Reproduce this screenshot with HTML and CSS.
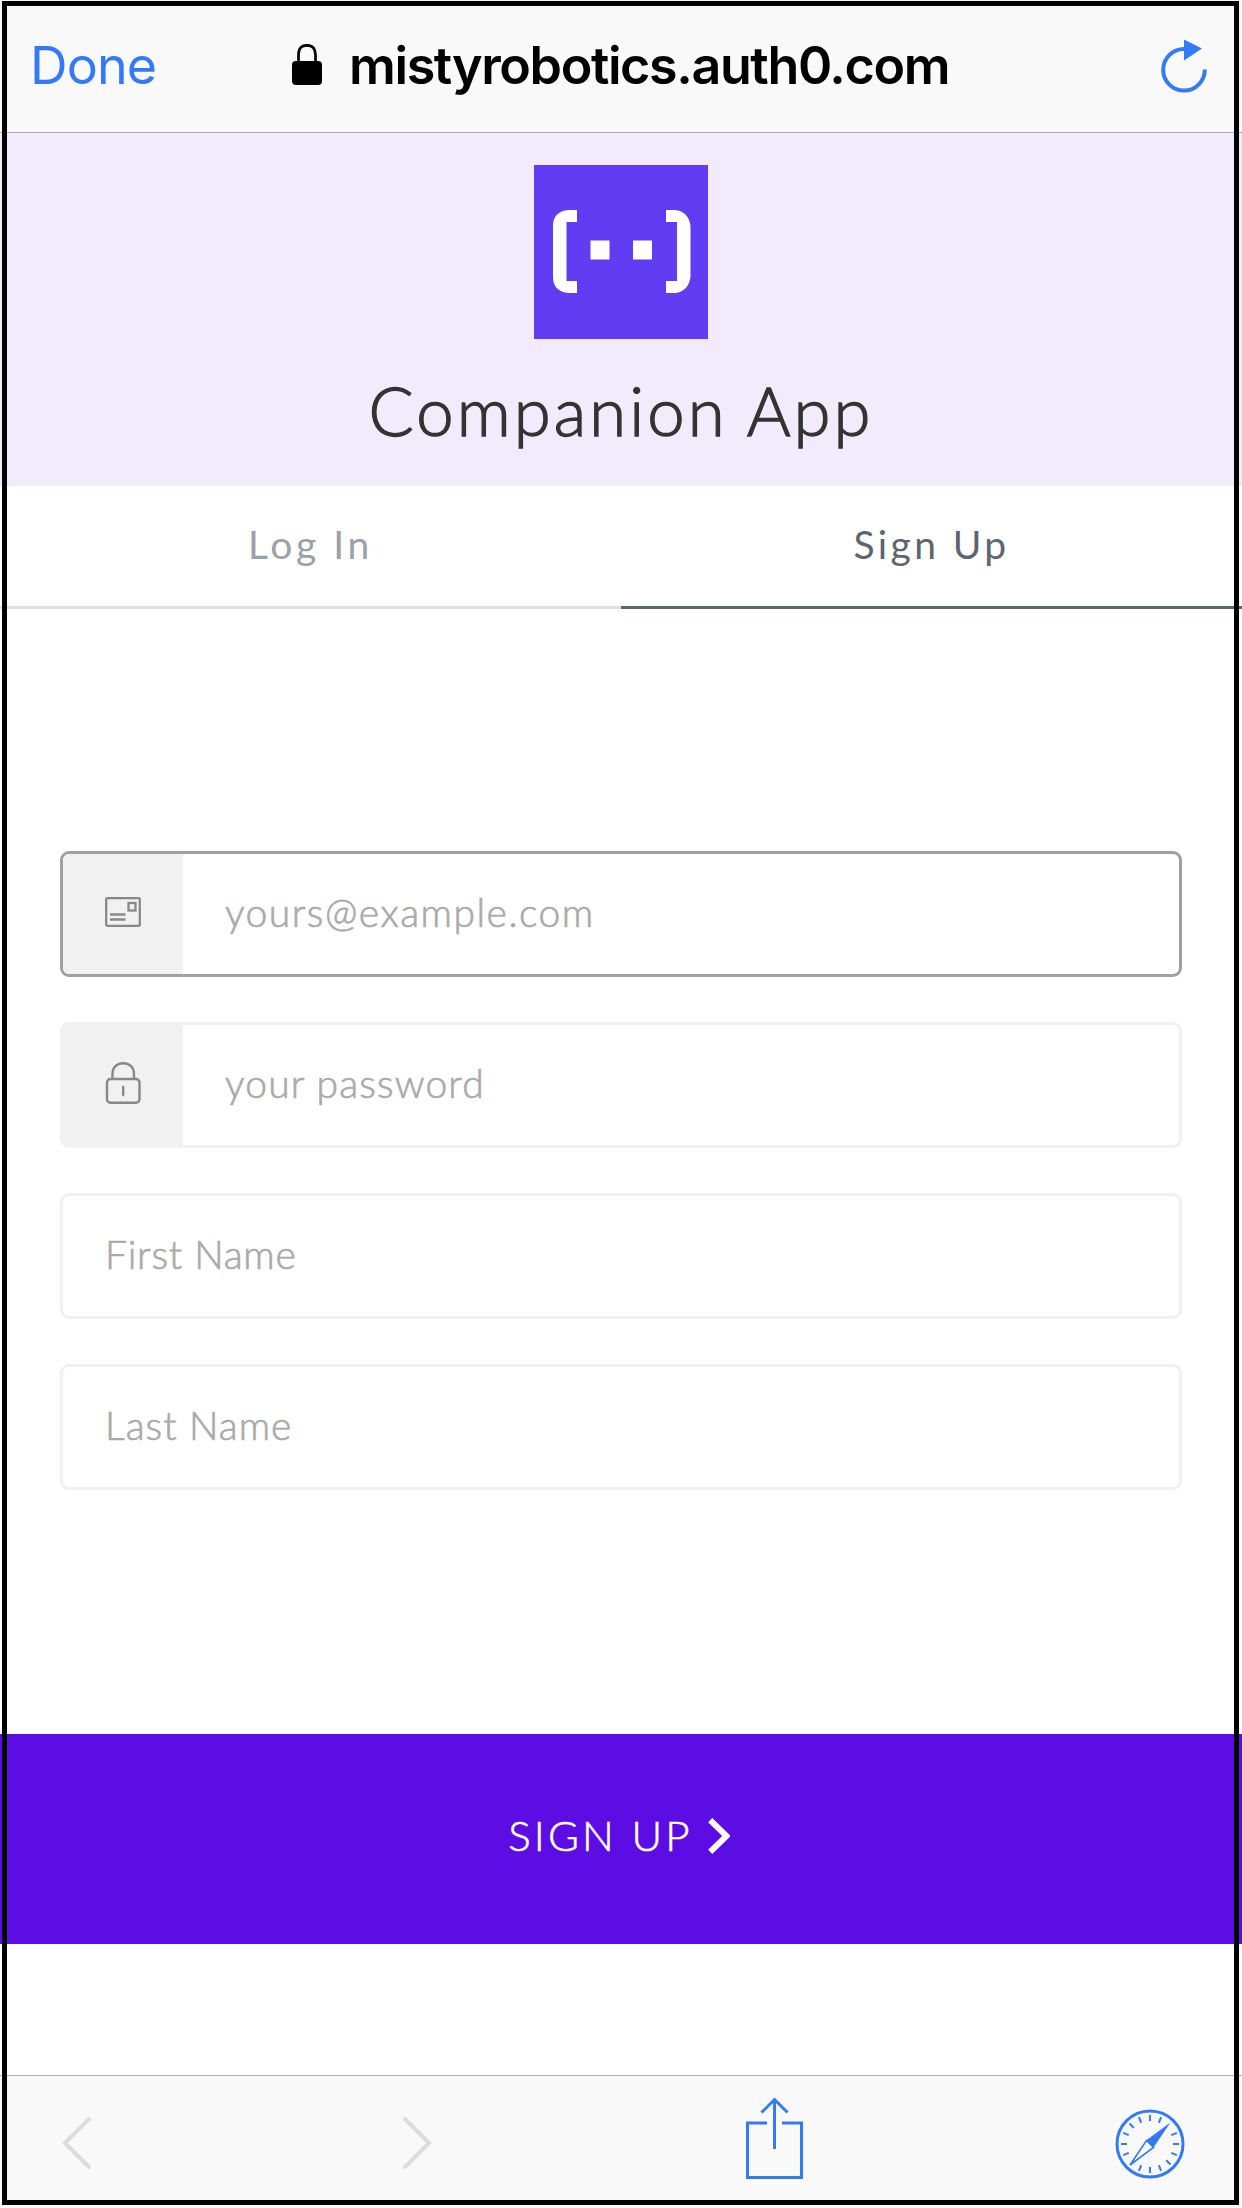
FILE: index.html
```html
<!DOCTYPE html>
<html lang="en">
<head>
<meta charset="utf-8">
<title>Companion App</title>
<link rel="stylesheet" href="styles.css">
</head>
<body>
<div class="screen">
  <header class="browser-bar">
    <a class="done">Done</a>
    <div class="address">
      <svg class="address-lock" width="30" height="41" viewBox="0 0 30 41"><rect y="17" width="30" height="24" rx="4"/><path d="M6.500 18V11Q6.500 1.300 15 1.300T23.500 11V18" fill="none" stroke="#000" stroke-width="2.700"/></svg>
      <span class="domain">mistyrobotics.auth0.com</span>
    </div>
    <svg class="reload" width="48" height="54" viewBox="0 0 48 54"><path d="M24 10A20.800 20.800 0 1 0 44.800 30.500" fill="none" stroke="#3479f7" stroke-width="4"/><path d="M24 .5V21.500L42 9.600Z" fill="#3479f7"/></svg>
  </header>

  <section class="brand">
    <svg class="logo" width="174" height="174" viewBox="0 0 174 174"><rect width="174" height="174" fill="#603cf3"/><g fill="#fff"><path d="M43 45H34.500Q19 46.500 19 61V112Q19 126.500 34.500 128H43V116H32.500V57H43Z"/><path d="M132 45H141Q154.500 46.500 156.500 61V112Q154.500 126.500 141 128H132V116H143V57H132Z"/><path d="M56.500 75.500H75.500V94.500H56.500ZM99 75.500H118V94.500H99Z"/></g></svg>
    <h1 class="app-name">Companion App</h1>
  </section>

  <nav class="tabs">
    <a class="tab"><span class="tab-login">Log In</span></a>
    <a class="tab tab-active"><span class="tab-signup">Sign Up</span></a>
  </nav>

  <form class="form">
    <label class="field field-focused">
      <span class="field-icon"><svg width="36" height="34" viewBox="0 0 36 34" fill="none" stroke="#888" stroke-width="2.300"><rect x="1.200" y="3.200" width="33.600" height="27.600" rx="1"/><rect x="23.500" y="8" width="7" height="7.500"/><path d="M5 19.500H20.500M5 24.500H20.500"/></svg></span>
      <input class="input input-email" type="text" placeholder="yours@example.com">
    </label>
    <label class="field">
      <span class="field-icon"><svg width="36" height="42" viewBox="0 0 36 42" fill="none" stroke="#888" stroke-width="2.400"><rect x="2" y="17" width="32.500" height="23.800" rx="3.500"/><path d="M7.500 17V12C7.500 5 12.500 1.200 18.200 1.200S29 5 29 12V17"/><path d="M18.200 25V33" stroke-linecap="round"/></svg></span>
      <input class="input input-password" type="text" placeholder="your password">
    </label>
    <label class="field"><input class="input input-first" type="text" placeholder="First Name"></label>
    <label class="field"><input class="input input-last" type="text" placeholder="Last Name"></label>
  </form>

  <button class="submit" type="button">
    <span class="submit-text">SIGN UP</span>
    <svg width="22" height="36" viewBox="0 0 22 36"><path d="M2.200 2.200L18.500 18L2.200 33.800" fill="none" stroke="#fff" stroke-width="6"/></svg>
  </button>

  <footer class="toolbar">
    <svg class="back" width="30" height="54" viewBox="0 0 30 54"><path d="M27 3L3 27L27 51" fill="none" stroke="#dcdcdc" stroke-width="4" stroke-linecap="round"/></svg>
    <svg class="forward" width="30" height="54" viewBox="0 0 30 54"><path d="M3 3L27 27L3 51" fill="none" stroke="#dcdcdc" stroke-width="4" stroke-linecap="round"/></svg>
    <svg class="share" width="58" height="82" viewBox="0 0 58 82" fill="none" stroke="#3479f7" stroke-width="3"><path d="M21 26H1.500V80.500H55.500V26H36M28.500 52V2.500M15.500 15.500L28.500 2.500L41.500 15.500"/></svg>
    <svg class="compass" width="70" height="70" viewBox="-35 -35 70 70" stroke="#3479f7" fill="none"><circle r="33" stroke-width="3"/>
      <g stroke-width="2"><path id="tick" d="M0-29V-23"/><use href="#tick" transform="rotate(22.500)"/><use href="#tick" transform="rotate(67.500)"/><use href="#tick" transform="rotate(90)"/><use href="#tick" transform="rotate(112.500)"/><use href="#tick" transform="rotate(135)"/><use href="#tick" transform="rotate(157.500)"/><use href="#tick" transform="rotate(180)"/><use href="#tick" transform="rotate(202.500)"/><use href="#tick" transform="rotate(247.500)"/><use href="#tick" transform="rotate(270)"/><use href="#tick" transform="rotate(292.500)"/><use href="#tick" transform="rotate(315)"/><use href="#tick" transform="rotate(337.500)"/></g>
      <path d="M-20 21L-3.500-3.500L3.500 3.500Z" stroke-width="1.600"/><path d="M20.500-21.500L-3.500-4L3.500 3.500Z" fill="#3479f7" stroke="none"/></svg>
  </footer>
</div>
<div class="frame"></div>
</body>
</html>
```
FILE: styles.css
```css
* { box-sizing: border-box; }
body { margin: 0; background: #fff; font-family: Lato, "Open Sans", sans-serif; }
svg { display: block; flex: none; }
.screen { width: 1242px; height: 2208px; display: flex; flex-direction: column; overflow: hidden; }
.frame { position: absolute; left: 2px; top: 1px; width: 1237px; height: 2204px; border: 5px solid #000; pointer-events: none; }

.browser-bar { height: 133px; display: flex; align-items: center; padding: 0 34px 0 30px; background: #f9f9f9; border-bottom: 1px solid #a9a9b0; font-family: Inter, sans-serif; }
.done { width: 262px; font-size: 52px; line-height: 60px; letter-spacing: -.9px; color: #3479f7; }
.address { display: flex; align-items: center; gap: 27px; flex: 1; }
.address-lock { margin-bottom: 3px; }
.domain { font-size: 52px; line-height: 60px; font-weight: 600; letter-spacing: -1.38px; white-space: nowrap; }

.brand { height: 353px; background: #f1ebfc; display: flex; flex-direction: column; align-items: center; padding-top: 32px; }
.app-name { margin: 31px 0 0; font-size: 67px; line-height: 80px; font-weight: 300; letter-spacing: 3.1px; color: #333; white-space: nowrap; -webkit-text-stroke: 1.3px #333; }

.tabs { height: 123px; display: flex; }
.tab { flex: 1; display: flex; justify-content: center; padding-top: 34px; font-size: 39px; line-height: 48px; color: #9ba1a8; border-bottom: 3px solid #e0e0e0; }
.tab-active { color: #5c666f; border-color: #5c666f; }
.tab-login { letter-spacing: 3.6px; }
.tab-signup { letter-spacing: 3.4px; }

.form { display: flex; flex-direction: column; gap: 45px; margin: 242px 60px 244px; }
.field { height: 126px; display: flex; border: 3px solid #f1f1f1; border-radius: 9px; overflow: hidden; }
.field-focused { border-color: #a0a0a0; }
.field-icon { width: 120px; flex: none; display: flex; align-items: center; justify-content: center; background: #f1f1f1; padding-bottom: 4px; }
.input { flex: 1; min-width: 0; border: 0; outline: 0; background: none; padding: 0 42px 5px; font: 300 39px Lato, sans-serif; }
.input::placeholder { color: #aaa; opacity: 1; -webkit-text-stroke: .7px #aaa; }
.input-email { letter-spacing: 1.5px; }
.input-password { letter-spacing: 1.15px; }
.input-first { letter-spacing: .75px; }
.input-last { letter-spacing: .98px; }

.submit { height: 210px; border: 0; padding: 0 4px 6px 0; background: #5c0de4; color: #fff; display: flex; align-items: center; justify-content: center; gap: 15px; }
.submit-text { margin-top: -2px; font: 300 42px/50px Lato, sans-serif; letter-spacing: 3.2px; -webkit-text-stroke: .6px #fff; }

.toolbar { margin-top: auto; height: 133px; display: flex; align-items: flex-start; background: #f9f9f9; border-top: 1px solid #b2b2b2; padding: 0 57px 0 62px; }
.back { margin-top: 40px; }
.forward { margin: 40px 0 0 310px; }
.share { margin: 21px auto 0 314px; }
.compass { margin-top: 33px; }
```
